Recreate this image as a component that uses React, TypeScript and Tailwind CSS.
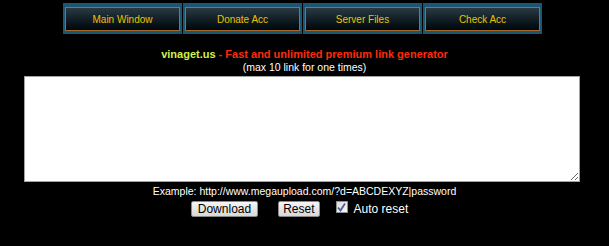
import React, { useState } from 'react';

const tabs = ['Main Window', 'Donate Acc', 'Server Files', 'Check Acc'];

const App = () => {
    const [links, setLinks] = useState('');
    const [autoReset, setAutoReset] = useState(true);

    return (
        <div className="w-[609px] h-[246px] bg-black flex flex-col items-center font-['Liberation_Sans',Arial,sans-serif]">
            {/* top menu */}
            <div className="flex gap-px mt-[3px] ml-[-4px]">
                {tabs.map((t) => (
                    <div key={t} className="w-[119px] h-[31px] bg-[#1b5674] pt-[4px] px-[2px] pb-[3px]">
                        <div className="h-full border border-[#a8682a] bg-gradient-to-b from-[#2b3942] to-[#01080c] flex items-center justify-center text-[10px] text-[#e8c400]">
                            {t}
                        </div>
                    </div>
                ))}
            </div>

            <div className="mt-[13px] text-[11px] font-bold leading-[14px]">
                <span className="text-[#d4f04a]">vinaget.us</span>
                <span className="text-[#ff2a0a]"> - Fast and unlimited premium link generator</span>
            </div>
            <div className="text-[10.5px] text-white leading-[13px]">(max 10 link for one times)</div>

            <textarea
                value={links}
                onChange={(e) => setLinks(e.target.value)}
                className="mt-[2px] ml-[-6px] w-[556px] h-[106px] bg-white border border-[#a3a3a3] outline-none resize"
            />

            <div className="mt-[2px] text-[10.5px] text-white leading-[14px]">
                Example: http://www.megaupload.com/?d=ABCDEXYZ|password
            </div>

            <div className="flex items-center mt-[2px] ml-[-10px] text-[12px]">
                <button className="h-[16px] px-[6px] text-[12px] leading-[14px] text-black border border-[#8a8a8a] rounded-[2px] bg-gradient-to-b from-[#f6f6f6] to-[#d8d8d8]">
                    Download
                </button>
                <button className="ml-[20px] h-[16px] px-[4px] text-[12px] leading-[14px] text-black border border-[#8a8a8a] rounded-[2px] bg-gradient-to-b from-[#f6f6f6] to-[#d8d8d8]">
                    Reset
                </button>
                <label className="ml-[16px] flex items-center cursor-pointer">
                    <input
                        type="checkbox"
                        checked={autoReset}
                        onChange={(e) => setAutoReset(e.target.checked)}
                        className="hidden"
                    />
                    <span className="w-[12px] h-[12px] mb-[4px] border border-[#8e8f8f] bg-gradient-to-br from-[#dcdcdc] to-[#f8f8f8] flex items-center justify-center">
                        {autoReset && (
                            <svg width="9" height="9" viewBox="0 0 9 9">
                                <path d="M1 4.5 L3.5 7.5 L8 0.5" stroke="#4b5d9a" strokeWidth="1.8" fill="none" />
                            </svg>
                        )}
                    </span>
                    <span className="ml-[6px] text-white">Auto reset</span>
                </label>
            </div>
        </div>
    );
};

export default App;
